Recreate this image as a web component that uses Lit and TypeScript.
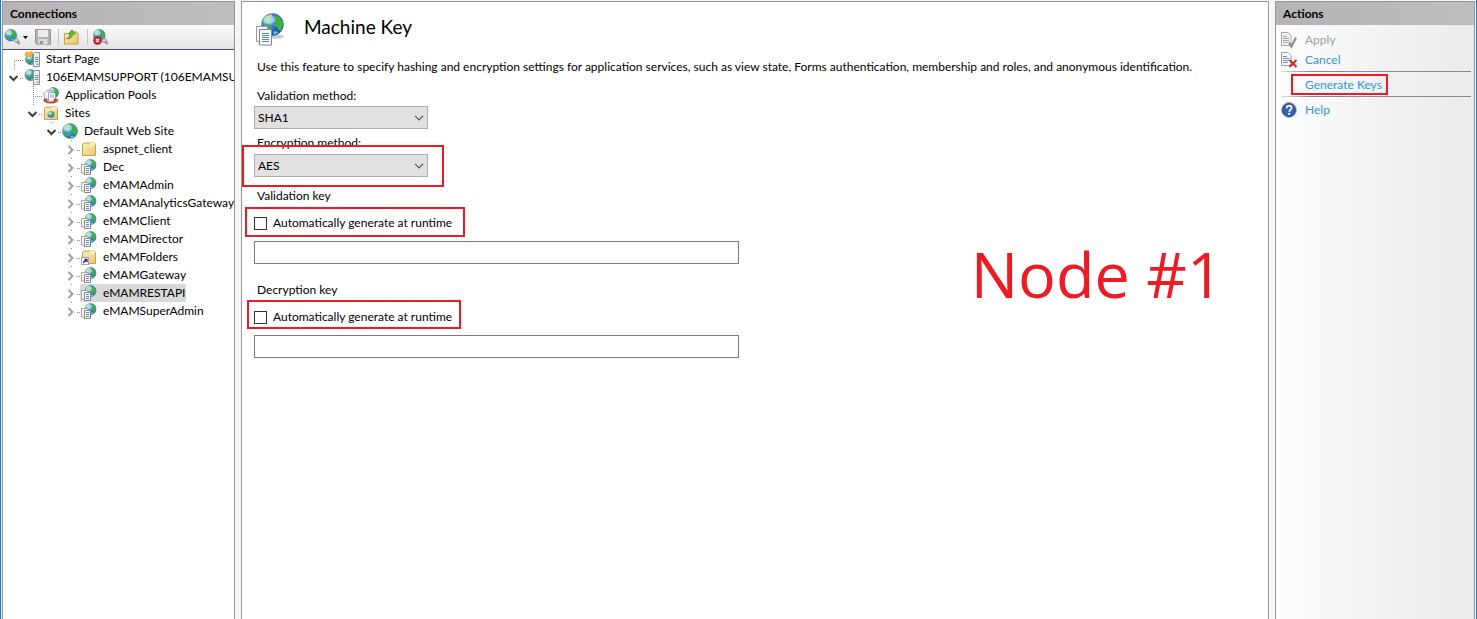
import { LitElement, html, css, svg, nothing } from "lit";
import { customElement, property, state } from "lit/decorators.js";

type IconName =
  | "startpage" | "server" | "pools" | "sites" | "globe" | "folder" | "app" | "vdir"
  | "connect" | "save" | "up" | "disconnect" | "apply" | "cancel" | "help" | "none";

interface TreeNode {
  label: string;
  level: number;
  icon: IconName;
  toggle?: "open" | "closed";
  first?: boolean;
  selected?: boolean;
}

const NODES: TreeNode[] = [
  { label: "Start Page", level: 0, icon: "startpage", first: true },
  { label: "106EMAMSUPPORT (106EMAMSUPPORT)", level: 0, icon: "server", toggle: "open" },
  { label: "Application Pools", level: 1, icon: "pools" },
  { label: "Sites", level: 1, icon: "sites", toggle: "open" },
  { label: "Default Web Site", level: 2, icon: "globe", toggle: "open" },
  { label: "aspnet_client", level: 3, icon: "folder", toggle: "closed" },
  { label: "Dec", level: 3, icon: "app", toggle: "closed" },
  { label: "eMAMAdmin", level: 3, icon: "app", toggle: "closed" },
  { label: "eMAMAnalyticsGateway", level: 3, icon: "app", toggle: "closed" },
  { label: "eMAMClient", level: 3, icon: "app", toggle: "closed" },
  { label: "eMAMDirector", level: 3, icon: "app", toggle: "closed" },
  { label: "eMAMFolders", level: 3, icon: "vdir", toggle: "closed" },
  { label: "eMAMGateway", level: 3, icon: "app", toggle: "closed" },
  { label: "eMAMRESTAPI", level: 3, icon: "app", toggle: "closed", selected: true },
  { label: "eMAMSuperAdmin", level: 3, icon: "app", toggle: "closed" },
];

/* Globe in a 16-unit box, scaled and moved by the caller. */
const globe = (x: number, y: number, size: number) => svg`
  <g transform="translate(${x} ${y}) scale(${size / 16})">
    <circle cx="8" cy="8" r="7.6" fill="url(#sea)" stroke="#3a6fae" stroke-width=".4"/>
    <path d="M1.600 5C2.800 2.600 5 1 7.600 1c.4.9-.4 1.600-1 2.200.8.6.4 1.600-.6 2.100C5 6 4.600 7 3.400 7.200 2.300 7.200 1.200 6.500 1.600 5Z" fill="#8ad676"/>
    <path d="M3 8.600c1.500-.5 3.200 0 4.200 1 .8.900.2 2-.4 2.900-.4.8-.6 1.700-1.300 1.900C3.500 13 2.300 11 3 8.600Z" fill="#3fae3c"/>
    <path d="M10.200 1.500c2.300.7 4.300 2.500 5 4.900.2 2.200-.2 4-1.400 5.800-1.400.7-2-.7-1.900-2-.9-.6-2.300-.6-2.600-1.800-.2-1.100.8-1.900.6-3-.4-.9-.6-2.800.3-3.900Z" fill="#3fb23a"/>
    <path d="M8.500 13c1.500-.6 2.800-.4 3.800.2-1 1-2.200 1.600-3.500 1.800Z" fill="#55c8e8"/>
    <ellipse cx="6" cy="4.500" rx="4" ry="3" fill="#fff" opacity=".4"/>
  </g>`;

const folder = svg`
  <path d="M1.500 3.500 3 2h10.500l1 1.500V14.500h-13Z" fill="url(#manila)" stroke="#c9a14a" stroke-width="1"/>
  <path d="M9 2h4.500l.8 2H9Z" fill="#fff3c4"/>
  <path d="M2 5h12" stroke="#fff0bd" stroke-width="1"/>`;

const tower = svg`
  <path d="M9.500 2.500 11 1.500H15.500V15.500H9.500Z" fill="#eceeef" stroke="#8c949b"/>
  <path d="M11 6.500h3.500M11 8.500h3.500M11 10.500h3.500" stroke="#848c94"/>
  <rect x="12.500" y="12.500" width="2" height="1.500" fill="#58c947"/>`;

const sheets = svg`
  <path d="M.5 5.500h6.500v8.500H.5Z" fill="#f8f8f8" stroke="#a5a5a5"/>
  <path d="M3.500 7.500h6v8h-6Z" fill="#fff" stroke="#868686"/>
  <path d="M5 9.500h3M5 11.500h3M5 13.500h3" stroke="#5b8cc4"/>`;

const plug = svg`
  <path d="M9 9.500l2.500 2.500 3.500 3" stroke="#959ba2" stroke-width="2.400" fill="none"/>
  <path d="M8.500 11.500 11.500 9l2 2.500-2.500 2Z" fill="#d7dbdf" stroke="#777e85" stroke-width=".8"/>`;

const ART: Record<IconName, unknown> = {
  startpage: svg`${globe(1, 2.500, 11.500)}<path d="M1 3 3 .5 4.500 2 8 .3 9 3 6.500 5.500 2 5.500Z" fill="#f9b233" stroke="#e08f1c" stroke-width=".6"/>${tower}`,
  server: svg`${globe(0.5, 0, 12)}${tower}`,
  pools: svg`${globe(4.5, 0, 11.5)}
    <path d="M.8 6.500 3.500 3.500 9 3.800 8.500 13H2Z" fill="#f2f4f7" stroke="#8b929b" stroke-width=".8"/>
    <path d="M5.500 5.500h5.500l1.500 1.500v7h-7Z" fill="#fff" stroke="#8b929b" stroke-width=".8"/>
    <path d="M7 8h4M7 10h4" stroke="#6c9bd0" stroke-width=".9"/>
    <path d="M1 12v2.500h3V12ZM11 12v2.500h3.500V12Z" fill="#e0503f" stroke="#9c2318" stroke-width=".5"/>
    <path d="M2.500 14.500c2.500 1.500 8 1.500 10.500 0" fill="none" stroke="#c63a2b" stroke-width="1.500"/>`,
  sites: svg`${folder}${globe(4.500, 6, 7)}`,
  globe: globe(0, 0, 16),
  folder,
  app: svg`${globe(3.5, 0, 12)}${sheets}`,
  vdir: svg`${folder}<rect x=".5" y="8.500" width="7" height="7" fill="#fff" stroke="#a5a5b5"/>
    <path d="M2 14.500c0-2 .6-3.200 2-3.500L3 9.800h3.700v3.700L5.500 12.400C4.500 12.800 3.500 13.500 2 14.500Z" fill="#2c2f96"/>`,
  connect: svg`${globe(-0.5, 0, 12.5)}${plug}`,
  disconnect: svg`${globe(0, 0, 12.5)}${plug}
    <circle cx="4.500" cy="11.500" r="4" fill="#cf2326" stroke="#9b1315" stroke-width=".6"/>
    <path d="m2.900 9.900 3.200 3.200m0-3.200-3.200 3.200" stroke="#fff" stroke-width="1.300"/>`,
  save: svg`<path d="M.5.500h15v15H2L.5 14Z" fill="#b2b2b2" stroke="#999"/>
    <rect x="3" y="1" width="10" height="7" fill="#ececec"/>
    <rect x="3.500" y="10" width="9" height="5.500" fill="#dcdcdc"/>
    <rect x="5" y="12" width="3" height="3" fill="#969696"/>`,
  up: svg`<path d="M.5 4.500h6l1-1.500h5.500l1 1.500v10.500H.5Z" fill="url(#manila)" stroke="#c9a14a"/>
    <path d="M2.500 9.500C4 9 5.800 8 6 5H4.200L8 .8 11.500 5H8.800C8.500 8.500 6 10.500 2.500 9.500Z" fill="#5cbf3a" stroke="#2f8a1e" stroke-width=".6"/>`,
  apply: svg`<path d="M.5.500h6.500l3 3v10H.5Z" fill="#f3f3f3" stroke="#a6a6a6"/>
    <path d="M2 4.500h4M2 6.500h6M2 8.500h6M2 10.500h5" stroke="#a3a3a3"/>
    <path d="m8 10.500 2.500 4L15 5.500" fill="none" stroke="#8f8f8f" stroke-width="2.200"/>`,
  cancel: svg`<path d="M.5.500h6.500l3 3v10H.5Z" fill="#fff" stroke="#9aa0aa"/>
    <path d="M2 4.500h4M2 6.500h6M2 8.500h6M2 10.500h5" stroke="#6a8fc4"/>
    <path d="m8.500 8 7 7m0-7-7 7" stroke="#d9201c" stroke-width="2"/>`,
  help: svg`<circle cx="8" cy="8" r="7.300" fill="#3a62bd" stroke="#a3abba" stroke-width="1.200"/>
    <circle cx="8" cy="8" r="6.300" fill="none" stroke="#1d3579" stroke-width=".8"/>
    <path d="M5.600 6.200C5.700 4.500 6.700 3.700 8.100 3.700c1.500 0 2.500.9 2.500 2.100 0 1.900-2.300 1.900-2.300 3.900" fill="none" stroke="#fff" stroke-width="1.700"/>
    <circle cx="8.200" cy="11.900" r="1.100" fill="#fff"/>`,
  none: nothing,
};

@customElement("ui-icon")
export class UiIcon extends LitElement {
  @property() name: IconName = "none";

  static styles = css`
    :host { display: block; flex: none; width: 16px; height: 16px; }
    .art { display: block; width: 100%; height: 100%; overflow: visible; }
  `;

  render() {
    return html`<svg class="art" viewBox="0 0 16 16" aria-hidden="true">
      <defs>
        <radialGradient id="sea" cx=".3" cy=".35" r=".8">
          <stop offset="0" stop-color="#a5def9"/>
          <stop offset=".45" stop-color="#3c8fe2"/>
          <stop offset="1" stop-color="#1a49b4"/>
        </radialGradient>
        <linearGradient id="manila" x1="0" y1="0" x2="1" y2="1">
          <stop offset="0" stop-color="#fdebae"/>
          <stop offset="1" stop-color="#ecc670"/>
        </linearGradient>
      </defs>
      ${ART[this.name]}
    </svg>`;
  }
}

@customElement("connection-tree")
export class ConnectionTree extends LitElement {
  @state() private nodes = NODES;

  static styles = css`
    :host { display: block; overflow: hidden; }
    .tree { margin: 0; padding: 0; list-style: none; }
    .row { display: flex; height: 18px; align-items: center; white-space: nowrap; }
    .l1 { padding-left: 19px; }
    .l2 { padding-left: 38px; }
    .l3 { padding-left: 57px; }
    .lines { flex: none; display: block; width: 20px; height: 18px; }
    .node { display: flex; align-items: center; height: 18px; padding: 0 1px; gap: 6px; }
    .selected { background: #d9d9d9; }
  `;

  private lines(n: TreeNode) {
    const dots = "#8c8c8c";
    return html`<svg class="lines" viewBox="0 0 20 18" fill="none" aria-hidden="true">
      ${n.first ? svg`<path d="M11.500 10v8" stroke=${dots} stroke-dasharray="1 1"/>` : nothing}
      ${!n.toggle && !n.first ? svg`<path d="M11.500 0v18" stroke=${dots} stroke-dasharray="1 1"/>` : nothing}
      ${n.toggle
        ? svg`<path d="M11.500 0v2M17 10.500h3" stroke=${dots} stroke-dasharray="1 1"/>`
        : svg`<path d="M11 10.500h9" stroke=${dots} stroke-dasharray="1 1"/>`}
      ${n.toggle === "open" ? svg`<path d="m6.500 8 4 4 4-4" stroke="#404040" stroke-width="2"/>` : nothing}
      ${n.toggle === "closed" ? svg`<path d="m8.500 6 4 4-4 4" stroke="#a0a0a0" stroke-width="2"/>` : nothing}
    </svg>`;
  }

  render() {
    return html`<ul class="tree" role="tree">
      ${this.nodes.map(
        (n) => html`<li class="row l${n.level}" role="treeitem" aria-selected=${n.selected ? "true" : "false"}>
          ${this.lines(n)}
          <span class="node ${n.selected ? "selected" : ""}"><ui-icon name=${n.icon}></ui-icon>${n.label}</span>
        </li>`
      )}
    </ul>`;
  }
}

@customElement("machine-key")
export class MachineKey extends LitElement {
  static styles = css`
    :host { display: block; position: relative; padding: 10px 12px; }
    .head { display: flex; align-items: center; gap: 18px; height: 34px; }
    .title { margin: 0; padding-bottom: 5px; font-size: 19px; font-weight: 400; }
    .big { width: 30px; height: 34px; margin-left: 2px; overflow: visible; }
    .intro { margin: 12px 3px 0; line-height: 18px; }
    .form { display: flex; flex-direction: column; align-items: flex-start; padding-top: 11px; }
    .label { margin: 0 3px; line-height: 18px; }
    .field { display: grid; width: 174px; height: 23px; margin: 1px 0 5px; align-items: center; }
    .select, .chevron { grid-area: 1 / 1; }
    .select {
      appearance: none; box-sizing: border-box; width: 100%; height: 23px; padding: 0 3px;
      border: 1px solid #adadad; border-radius: 0; background: #e1e1e1; color: #000; font: inherit;
    }
    .chevron { justify-self: end; width: 10px; height: 6px; margin-right: 4px; pointer-events: none; }
    .marked { position: relative; }
    .field.marked { margin-top: 2px; }
    .mark { position: absolute; border: 2px solid #ed1c24; pointer-events: none; }
    .mark-select { inset: -9px -16px -10px -12px; }
    .mark-check { inset: -7px -13px -5px -9px; }
    .mark-check2 { inset: -8px -9px -3px -7px; }
    .check { display: flex; align-items: center; gap: 6px; height: 18px; margin: 9px 0; }
    .box {
      appearance: none; box-sizing: border-box; width: 13px; height: 13px; margin: 0;
      border: 1px solid #333; background: #fff;
    }
    .key {
      box-sizing: border-box; width: 485px; max-width: 100%; height: 23px; padding: 0 4px;
      border: 1px solid #7a7a7a; border-radius: 0; background: #fff; font: inherit;
    }
    .gap { margin-top: 5px; }
    .gap2 { margin-top: 17px; }
    .note { position: absolute; top: 226px; right: 45px; margin: 0; color: #ed1c24; font: 63px/92px "Open Sans", "Noto Sans", sans-serif; }
  `;

  private select(id: string, value: string, others: string[]) {
    return html`<select class="select" id=${id}>
        <option selected>${value}</option>
        ${others.map((o) => html`<option>${o}</option>`)}
      </select>
      <svg class="chevron" viewBox="0 0 10 6" aria-hidden="true">
        <path d="m1 .8 4 4 4-4" fill="none" stroke="#555" stroke-width="1.200"/>
      </svg>`;
  }

  render() {
    return html`
      <header class="head">
        <svg class="big" viewBox="0 0 30 34" aria-hidden="true">
          <defs>
            <radialGradient id="sea" cx=".3" cy=".3" r=".85">
              <stop offset="0" stop-color="#9cd6f8"/>
              <stop offset=".45" stop-color="#2a74d8"/>
              <stop offset="1" stop-color="#0d2f96"/>
            </radialGradient>
          </defs>
          <ellipse cx="20" cy="24.500" rx="8" ry="2" fill="#c9c9c9"/>
          ${globe(5, 1, 23)}
          <path d="M.5 14.500h11v15H.5Z" fill="#f7f7f7" stroke="#9a9a9a"/>
          <path d="M3.500 17.500h12v15.500H3.500Z" fill="#fff" stroke="#868686"/>
          <path d="M6 21.500h7M6 23.500h7M6 25.500h7M6 27.500h7M6 29.500h7" stroke="#4d87c7"/>
        </svg>
        <h1 class="title">Machine Key</h1>
      </header>
      <p class="intro">Use this feature to specify hashing and encryption settings for application services, such as view state, Forms authentication, membership and roles, and anonymous identification.</p>
      <div class="form">
        <label class="label" for="validation">Validation method:</label>
        <div class="field">${this.select("validation", "SHA1", ["MD5", "HMACSHA256"])}</div>
        <label class="label" for="encryption">Encryption method:</label>
        <div class="field marked">
          ${this.select("encryption", "AES", ["Auto", "TripleDES"])}
          <span class="mark mark-select"></span>
        </div>
        <label class="label gap" for="vkey">Validation key</label>
        <label class="check marked">
          <input class="box" type="checkbox" />Automatically generate at runtime
          <span class="mark mark-check"></span>
        </label>
        <input class="key" id="vkey" type="text" />
        <label class="label gap2" for="dkey">Decryption key</label>
        <label class="check marked">
          <input class="box" type="checkbox" />Automatically generate at runtime
          <span class="mark mark-check2"></span>
        </label>
        <input class="key" id="dkey" type="text" />
      </div>
      <p class="note">Node #1</p>
    `;
  }
}

@customElement("app-root")
export class AppRoot extends LitElement {
  static styles = css`
    :host {
      display: block; box-sizing: border-box; height: 100vh; overflow: hidden;
      border: solid #1979ca; border-width: 0 1px; background: #f6f6f6; color: #000;
      font: 12px/18px Lato, "Open Sans", sans-serif;
    }
    .window {
      display: grid; grid-template-columns: 233px minmax(0, 1fr) 200px; column-gap: 6px;
      box-sizing: border-box; height: 100%; padding: 1px 1px 0;
    }
    .pane { display: flex; flex-direction: column; min-width: 0; border: 1px solid #969696; border-bottom: 0; background: #fff; }
    .bar { margin: 0; padding: 0 7px; height: 23px; line-height: 23px; font-size: 12px; font-weight: 700; background: linear-gradient(90deg, #b5b3b5, #bfbebf); }
    .tools { display: flex; align-items: center; height: 24px; padding-left: 2px; border-bottom: 1px solid #4a4a70; background: linear-gradient(#fafafa, #e4e4e4); }
    .tool { display: flex; align-items: center; gap: 2px; padding: 0; border: 0; background: none; }
    .caret { width: 5px; height: 3px; margin-right: 7px; }
    .sep { width: 1px; height: 16px; margin: 0 5px 0 7px; background: #c9c5b4; }
    .actions { background: linear-gradient(90deg, #fdfdfd, #f3f3f3 50%, #ebebeb); }
    .list { display: flex; flex-direction: column; padding: 5px 3px 0 5px; }
    .action {
      display: flex; align-items: center; gap: 8px; height: 20px; padding: 0; border: 0;
      background: none; color: #3393df; font: inherit; text-align: left; text-decoration: none;
    }
    .action:disabled { color: #a0a0a0; }
    .rule { width: 100%; height: 1px; margin: 1px 0 3px; border: 0; background: linear-gradient(90deg, #e0e0e0, #8a8a8a 15%, #8a8a8a); }
    .marked { position: relative; }
    .mark { position: absolute; top: -2px; bottom: -1px; left: -14px; right: -6px; border: 2px solid #ed1c24; }
  `;

  render() {
    return html`<div class="window">
      <nav class="pane" aria-label="Connections">
        <h2 class="bar">Connections</h2>
        <div class="tools">
          <button class="tool" aria-label="Connect">
            <ui-icon name="connect"></ui-icon>
            <svg class="caret" viewBox="0 0 5 3" aria-hidden="true"><path d="M0 0h5L2.500 3Z"/></svg>
          </button>
          <button class="tool" aria-label="Save" disabled><ui-icon name="save"></ui-icon></button>
          <span class="sep"></span>
          <button class="tool" aria-label="Up"><ui-icon name="up"></ui-icon></button>
          <span class="sep"></span>
          <button class="tool" aria-label="Disconnect"><ui-icon name="disconnect"></ui-icon></button>
        </div>
        <connection-tree></connection-tree>
      </nav>
      <main class="pane"><machine-key></machine-key></main>
      <aside class="pane actions">
        <h2 class="bar">Actions</h2>
        <div class="list">
          <button class="action" disabled><ui-icon name="apply"></ui-icon>Apply</button>
          <button class="action"><ui-icon name="cancel"></ui-icon>Cancel</button>
          <hr class="rule" />
          <a class="action" href="#generate"><ui-icon name="none"></ui-icon><span class="marked">Generate Keys<span class="mark"></span></span></a>
          <hr class="rule" />
          <a class="action" href="#help"><ui-icon name="help"></ui-icon>Help</a>
        </div>
      </aside>
    </div>`;
  }
}
